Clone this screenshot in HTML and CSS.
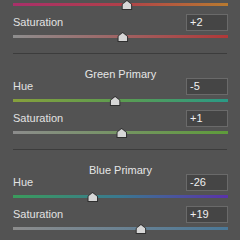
FILE: index.html
```html
<!DOCTYPE html>
<html>
<head>
<meta charset="utf-8">
<link rel="stylesheet" href="styles.css">
</head>
<body>
<div class="panel">
  <section class="group group-first">
    <div class="row">
      <div class="row-head"></div>
      <div class="track track-red-hue"><span class="thumb" style="left:53%"></span></div>
    </div>
    <div class="row">
      <div class="row-head"><span class="label">Saturation</span><span class="field">+2</span></div>
      <div class="track track-red-sat"><span class="thumb" style="left:51%"></span></div>
    </div>
  </section>
  <hr class="divider">
  <section class="group">
    <div class="heading">Green Primary</div>
    <div class="row">
      <div class="row-head"><span class="label">Hue</span><span class="field">-5</span></div>
      <div class="track track-green-hue"><span class="thumb" style="left:47.5%"></span></div>
    </div>
    <div class="row">
      <div class="row-head"><span class="label">Saturation</span><span class="field">+1</span></div>
      <div class="track track-green-sat"><span class="thumb" style="left:50.5%"></span></div>
    </div>
  </section>
  <hr class="divider">
  <section class="group">
    <div class="heading">Blue Primary</div>
    <div class="row">
      <div class="row-head"><span class="label">Hue</span><span class="field">-26</span></div>
      <div class="track track-blue-hue"><span class="thumb" style="left:37%"></span></div>
    </div>
    <div class="row">
      <div class="row-head"><span class="label">Saturation</span><span class="field">+19</span></div>
      <div class="track track-blue-sat"><span class="thumb" style="left:59.5%"></span></div>
    </div>
  </section>
</div>
</body>
</html>
```
FILE: styles.css
```css
html, body {
  margin: 0;
  padding: 0;
  background: #535353;
  overflow: hidden;
}
body {
  width: 240px;
  height: 240px;
  font-family: "Liberation Sans", Arial, sans-serif;
  font-size: 11px;
  color: #e2e2e2;
}
.panel {
  margin-top: -18px;
  padding: 0 12px 0 13px;
}
.group {
  display: flex;
  flex-direction: column;
}
.heading {
  height: 10px;
  margin-top: 14px;
  line-height: 13px;
  text-align: center;
  color: #e6e6e6;
}
.row {
  display: flex;
  flex-direction: column;
  margin-bottom: 8px;
}
.row-head {
  display: flex;
  justify-content: space-between;
  align-items: center;
  height: 17px;
}
.label {
  line-height: 13px;
}
.field {
  box-sizing: border-box;
  width: 42px;
  height: 17px;
  border: 1px solid #6a6a6a;
  background: #454545;
  padding-left: 3px;
  line-height: 15px;
  color: #f0f0f0;
}
.track {
  position: relative;
  height: 3px;
  margin-top: 4px;
}
.thumb {
  position: absolute;
  top: -3px;
  width: 11px;
  height: 10px;
  transform: translateX(-50%);
  background: #2e2e2e;
  clip-path: polygon(50% 0, 100% 45%, 100% 100%, 0 100%, 0 45%);
}
.thumb::after {
  content: "";
  position: absolute;
  left: 1px;
  top: 1px;
  width: 9px;
  height: 8px;
  background: #d6d6d6;
  clip-path: polygon(50% 0, 100% 45%, 100% 100%, 0 100%, 0 45%);
}
.divider {
  margin: 7px 1px 0 0;
  border: 0;
  height: 1px;
  background: #3c3c3c;
}
.track-red-hue { background: linear-gradient(to right, #a8306a, #b0404a 50%, #b87a30); }
.track-red-sat { background: linear-gradient(to right, #8e8e8e, #b03838); }
.track-green-hue { background: linear-gradient(to right, #86a03c, #5c9c50 50%, #2a9a86); }
.track-green-sat { background: linear-gradient(to right, #8c8c8c, #5e9c3a); }
.track-blue-hue { background: linear-gradient(to right, #3a9c5c, #3a7890 50%, #5a32aa); }
.track-blue-sat { background: linear-gradient(to right, #8c8c8c, #4a7898); }
```
